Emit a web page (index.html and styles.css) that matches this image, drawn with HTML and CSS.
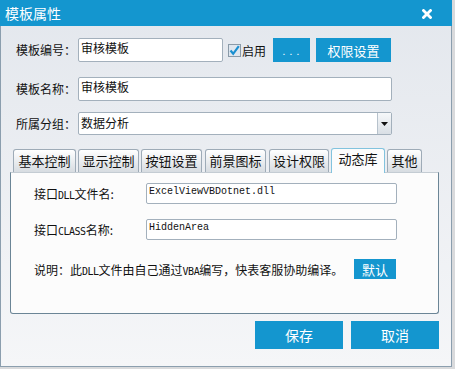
FILE: index.html
```html
<!DOCTYPE html>
<html>
<head>
<meta charset="utf-8">
<link rel="stylesheet" href="styles.css">
</head>
<body>
<div class="window">
  <div class="titlebar">
    <span class="title">模板属性</span>
    <svg class="close" width="10" height="10" viewBox="0 0 10 10"><path d="M1.5 1.5 L8.5 8.5 M8.5 1.5 L1.5 8.5" stroke="#fff" stroke-width="2.8" stroke-linecap="square"/></svg>
  </div>
  <div class="content">
    <div class="row row1">
      <span class="label">模板编号：</span>
      <div class="input w145">审核模板</div>
      <svg class="check" width="13" height="13" viewBox="0 0 13 13"><rect x="0.5" y="0.5" width="12" height="12" fill="#dfe6ee" stroke="#8a9aa8"/><path d="M2.5 6.5 L5.2 9.8 L10.8 2.2" fill="none" stroke="#1a8fd0" stroke-width="2.2"/></svg>
      <span class="chk-label">启用</span>
      <button class="btn dots">. . .</button>
      <button class="btn perm">权限设置</button>
    </div>
    <div class="row row2">
      <span class="label">模板名称：</span>
      <div class="input w314">审核模板</div>
    </div>
    <div class="row row3">
      <span class="label">所属分组：</span>
      <div class="input select w314">
        <span class="sel-text">数据分析</span>
        <span class="arrow"><svg width="7" height="4" viewBox="0 0 7 4"><path d="M0 0 H7 L3.5 4 Z" fill="#111"/></svg></span>
      </div>
    </div>
    <div class="tabs">
      <div class="tab t1">基本控制</div>
      <div class="tab t2">显示控制</div>
      <div class="tab t3">按钮设置</div>
      <div class="tab t4">前景图标</div>
      <div class="tab t5">设计权限</div>
      <div class="tab active">动态库</div>
      <div class="tab t7">其他</div>
    </div>
    <div class="panel">
      <div class="prow">
        <span class="plabel">接口<span class="small">DLL</span>文件名:</span>
        <div class="input mono">ExcelViewVBDotnet.dll</div>
      </div>
      <div class="prow prow2">
        <span class="plabel">接口<span class="small">CLASS</span>名称:</span>
        <div class="input mono">HiddenArea</div>
      </div>
      <div class="prow prow3">
        <span class="desc">说明：此<span class="small">DLL</span>文件由自己通过<span class="small">VBA</span>编写，快表客服协助编译。</span>
        <button class="btn def">默认</button>
      </div>
    </div>
    <div class="footer">
      <button class="btn big">保存</button>
      <button class="btn big">取消</button>
    </div>
  </div>
</div>
</body>
</html>
```
FILE: styles.css
```css
* { box-sizing: border-box; }
html, body { margin: 0; padding: 0; }
body {
  width: 455px;
  height: 369px;
  background: #d9dadc;
  font-family: "Noto Sans CJK SC", "Noto Sans", sans-serif;
  font-size: 12px;
  color: #111;
  overflow: hidden;
  white-space: nowrap;
}
.window {
  width: 452px;
  height: 367px;
  border: 1px solid #8b9eae;
  border-top: 0;
  background: linear-gradient(#e3e7ed, #f5f6f8);
}
.titlebar {
  height: 26px;
  margin: 0 -1px;
  background: #1496cf;
  display: flex;
  align-items: center;
  justify-content: space-between;
  padding: 0 20px 0 5px;
  color: #fff;
}
.title { font-size: 14px; line-height: 26px; }
.close { display: block; margin-top: 1px; }
.content { padding: 12px 0 0 0; }
.row {
  display: flex;
  align-items: center;
  height: 24px;
  padding-left: 15px;
}
.row2 { margin-top: 15px; }
.row3 { margin-top: 11px; height: 23px; }
.label { width: 62px; flex-shrink: 0; line-height: 24px; }
.input {
  height: 100%;
  flex-shrink: 0;
  background: #fff;
  border: 1px solid #a3b0bc;
  border-radius: 2px;
  padding: 0 2px;
  line-height: 17px;
  font-size: 12px;
}
.w145 { width: 145px; }
.w314 { width: 314px; }
.check { margin-left: 5px; display: block; flex-shrink: 0; }
.chk-label { margin-left: 1px; width: 31px; flex-shrink: 0; }
.btn {
  border: 0;
  background: #1496cf;
  color: #fff;
  font-family: "Noto Sans CJK SC", "Noto Sans", sans-serif;
  font-size: 12px;
  padding: 0;
  flex-shrink: 0;
  cursor: pointer;
}
.dots { width: 37px; height: 24px; font-size: 10px; letter-spacing: 1px; }
.perm { width: 75px; height: 24px; margin-left: 6px; font-size: 13px; }
.select { display: flex; padding: 0 0 0 2px; justify-content: space-between; }
.sel-text { line-height: 19px; }
.arrow {
  width: 14px;
  border-left: 1px solid #b7c2cc;
  background: linear-gradient(#f6f8fa, #d9dfe5);
  display: flex;
  align-items: center;
  justify-content: center;
}
.arrow svg { display: block; }
.tabs {
  display: flex;
  align-items: flex-end;
  margin-top: 12px;
  padding-left: 12px;
  height: 25px;
}
.tab {
  height: 23px;
  flex-shrink: 0;
  border: 1px solid #9eabb7;
  border-bottom: 0;
  border-radius: 3px 3px 0 0;
  background: linear-gradient(#ffffff, #d7dce1);
  text-align: center;
  line-height: 22px;
  margin-right: 2px;
  font-size: 13px;
}
.t1 { width: 63px; }
.t2 { width: 61px; }
.t3 { width: 61px; margin-right: 3px; }
.t4 { width: 61px; margin-right: 3px; }
.t5 { width: 60px; }
.t7 { width: 35px; }
.tab.active {
  width: 54px;
  height: 25px;
  background: #fcfcfc;
  border-color: #82c3de;
  line-height: 20px;
  position: relative;
  top: 1px;
  z-index: 1;
}
.panel {
  margin-left: 9px;
  width: 429px;
  height: 142px;
  background: #fcfcfc;
  border: 1px solid #6b8596;
  border-top-color: #c4ccd3;
  border-radius: 0 0 3px 3px;
  padding: 10px 0 0 23px;
}
.prow { display: flex; align-items: center; height: 21px; }
.prow2 { margin-top: 15px; }
.prow3 { margin-top: 19px; height: 20px; }
.plabel { width: 112px; flex-shrink: 0; }
.small { font-family: "DejaVu Sans Mono", monospace; font-size: 10px; letter-spacing: -0.5px; }
.mono {
  width: 251px;
  font-family: "Liberation Mono", "DejaVu Sans Mono", monospace;
  font-size: 10px;
  line-height: 16px;
  padding-left: 2px;
}
.desc { width: 320px; flex-shrink: 0; }
.def { width: 42px; height: 20px; font-size: 13px; }
.footer {
  display: flex;
  justify-content: flex-end;
  gap: 8px;
  margin-top: 7px;
  width: 438px;
}
.big { width: 88px; height: 28px; font-size: 14px; }
```
